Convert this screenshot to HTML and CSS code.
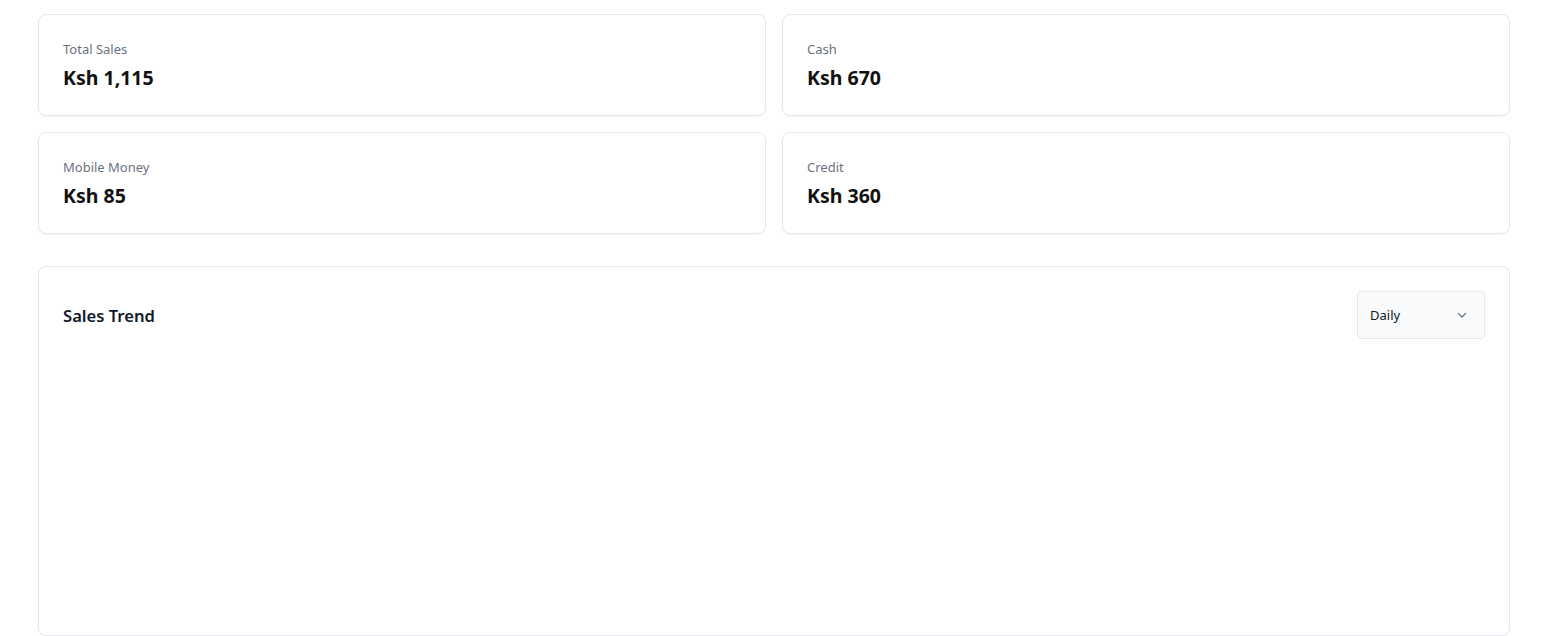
FILE: index.html
```html
<!DOCTYPE html>
<html>
<head>
<meta charset="utf-8">
<link rel="stylesheet" href="styles.css">
</head>
<body>
<main class="page">
  <section class="stats">
    <div class="card stat">
      <div class="stat-label">Total Sales</div>
      <div class="stat-value">Ksh 1,115</div>
    </div>
    <div class="card stat">
      <div class="stat-label">Cash</div>
      <div class="stat-value">Ksh 670</div>
    </div>
    <div class="card stat">
      <div class="stat-label">Mobile Money</div>
      <div class="stat-value">Ksh 85</div>
    </div>
    <div class="card stat">
      <div class="stat-label">Credit</div>
      <div class="stat-value">Ksh 360</div>
    </div>
  </section>
  <section class="card chart">
    <header class="chart-head">
      <h2 class="chart-title">Sales Trend</h2>
      <div class="select">
        <span>Daily</span>
        <svg class="chev" width="12" height="12" viewBox="0 0 12 12"><path d="M2.5 4.5 6 8l3.5-3.5" fill="none" stroke="#6b7280" stroke-width="1.2" stroke-linecap="round" stroke-linejoin="round"/></svg>
      </div>
    </header>
    <div class="chart-body"></div>
  </section>
</main>
</body>
</html>
```
FILE: styles.css
```css
html, body {
  margin: 0;
  padding: 0;
  background: #ffffff;
  font-family: "Noto Sans", "Open Sans", "Liberation Sans", sans-serif;
  color: #111827;
  overflow: hidden;
}
.page {
  width: 1472px;
  padding: 14px 0 0 38px;
  display: flex;
  flex-direction: column;
  gap: 32px;
}
.stats {
  display: grid;
  grid-template-columns: 1fr 1fr;
  gap: 16px;
}
.card {
  background: #fff;
  border: 1px solid #e5e7eb;
  border-radius: 8px;
  box-shadow: 0 1px 2px rgba(0,0,0,0.04);
  box-sizing: border-box;
}
.stat {
  height: 102px;
  padding: 25px 24px 0;
}
.stat-label {
  font-size: 13px;
  line-height: 18px;
  color: #6b7280;
}
.stat-value {
  margin-top: 8px;
  font-size: 19.5px;
  line-height: 24px;
  font-weight: 700;
  color: #111111;
}
.chart {
  height: 370px;
  padding: 24px;
}
.chart-head {
  display: flex;
  align-items: center;
  justify-content: space-between;
}
.chart-title {
  margin: 0;
  font-size: 16.6px;
  font-weight: 600;
  color: #111827;
}
.select {
  width: 128px;
  height: 48px;
  box-sizing: border-box;
  border: 1px solid #e5e7eb;
  border-radius: 4px;
  background: #f9fafb;
  display: flex;
  align-items: center;
  justify-content: space-between;
  padding: 0 16px 0 12px;
  font-size: 13px;
  color: #111827;
}
```
